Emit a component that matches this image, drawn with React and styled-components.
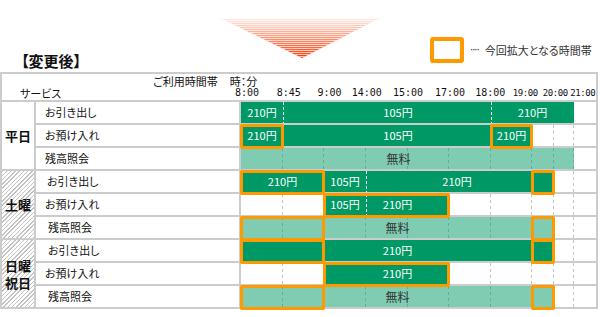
import React from "react";
import styled, { createGlobalStyle } from "styled-components";

const GlobalStyle = createGlobalStyle`
  * { box-sizing: border-box; }
  body {
    margin: 0;
    background: #fff;
    color: #222;
    font-family: "Noto Sans CJK JP", "Noto Sans", sans-serif;
    font-feature-settings: "palt";
  }
`;

// 8:00 8:45 9:00 14:00 15:00 17:00 18:00 19:00 20:00 21:00 | end
const TRACK_COLS = "42px 41px 42px 42px 41px 42px 41px 22px 20px 22px";
const T = { "8:00": 1, "8:45": 2, "9:00": 3, "14:00": 4, "15:00": 5, "17:00": 6, "18:00": 7, "19:00": 8, "20:00": 9, "21:00": 10, end: 11 };

const scale = [
  { t: " 8:00" }, { t: " 8:45" }, { t: " 9:00" }, { t: "14:00" }, { t: "15:00" },
  { t: "17:00" }, { t: "18:00" }, { t: "19:00", small: true }, { t: "20:00", small: true }, { t: "21:00", small: true },
];

const seg = (from, to, kind, label, extra = {}) => ({ from: T[from], to: T[to], kind, label, ...extra });

const groups = [
  {
    name: ["平日"],
    hatch: false,
    rows: [
      {
        service: "お引き出し",
        segs: [
          seg("8:00", "8:45", "dark", "210円"),
          seg("8:45", "18:00", "dark", "105円", { sep: true, shift: 11 }),
          seg("18:00", "21:00", "dark", "210円", { sep: true }),
        ],
        hl: [],
      },
      {
        service: "お預け入れ",
        segs: [
          seg("8:00", "8:45", "dark", "210円"),
          seg("8:45", "18:00", "dark", "105円", { sep: true, shift: 11 }),
          seg("18:00", "19:00", "dark", "210円", { sep: true }),
        ],
        hl: [["8:00", "8:45"], ["18:00", "19:00"]],
      },
      {
        service: "残高照会",
        segs: [seg("8:00", "21:00", "light", "無料", { shift: -9 })],
        hl: [],
      },
    ],
  },
  {
    name: ["土曜"],
    hatch: true,
    rows: [
      {
        service: "お引き出し",
        indent: 11,
        segs: [
          seg("8:00", "9:00", "dark", "210円"),
          seg("9:00", "14:00", "dark", "105円"),
          seg("14:00", "19:00", "dark", "210円", { sep: true, shift: 8 }),
          seg("19:00", "20:00", "dark"),
        ],
        hl: [["8:00", "9:00"], ["19:00", "20:00"]],
      },
      {
        service: "お預け入れ",
        segs: [
          seg("9:00", "14:00", "dark", "105円"),
          seg("14:00", "17:00", "dark", "210円", { sep: true, shift: -10 }),
        ],
        hl: [["9:00", "17:00"]],
      },
      {
        service: "残高照会",
        indent: 12,
        segs: [seg("8:00", "20:00", "light", "無料")],
        hl: [["8:00", "9:00"], ["19:00", "20:00"]],
      },
    ],
  },
  {
    name: ["日曜", "祝日"],
    hatch: true,
    rows: [
      {
        service: "お引き出し",
        indent: 12,
        segs: [seg("8:00", "20:00", "dark", "210円")],
        hl: [["8:00", "9:00"], ["19:00", "20:00"]],
      },
      {
        service: "お預け入れ",
        segs: [seg("9:00", "17:00", "dark", "210円", { shift: 11 })],
        hl: [["9:00", "17:00"]],
      },
      {
        service: "残高照会",
        indent: 12,
        segs: [seg("8:00", "20:00", "light", "無料")],
        hl: [["8:00", "9:00"], ["19:00", "20:00"]],
      },
    ],
  },
];

const Arrow = () => (
  <svg width="160" height="40" viewBox="0 0 160 40">
    <defs>
      <linearGradient id="arrowFill" x1="0" y1="0" x2="0" y2="1">
        <stop offset="0" stopColor="#ffeee8" />
        <stop offset="0.55" stopColor="#ff8a66" />
        <stop offset="1" stopColor="#ff3300" />
      </linearGradient>
      <pattern id="arrowStripes" width="4" height="2" patternUnits="userSpaceOnUse">
        <rect width="4" height="1" fill="#fff" opacity="0.7" />
      </pattern>
    </defs>
    <polygon points="0,0 160,0 82,40" fill="url(#arrowFill)" />
    <polygon points="0,0 160,0 82,40" fill="url(#arrowStripes)" />
  </svg>
);

const App = () => {
  return (
    <Page>
      <GlobalStyle />
      <Top>
        <Title>【変更後】</Title>
        <ArrowWrap>
          <Arrow />
        </ArrowWrap>
        <Legend>
          <LegendBox />
          <Dots>····</Dots>
          <span>今回拡大となる時間帯</span>
        </Legend>
      </Top>
      <Table>
        <HeaderCell>
          <UsageLine>
            <span>ご利用時間帯</span>
            <span>時：分</span>
          </UsageLine>
          <ServiceHead>サービス</ServiceHead>
          <TimeScale>
            {scale.map((s) => (
              <TimeLabel key={s.t} $small={s.small}>
                {s.t}
              </TimeLabel>
            ))}
          </TimeScale>
        </HeaderCell>
        {groups.map((g) => (
          <React.Fragment key={g.name.join("")}>
            <Group $hatch={g.hatch}>
              <GroupName>
                {g.name.map((n) => (
                  <span key={n}>{n}</span>
                ))}
              </GroupName>
            </Group>
            {g.rows.map((r) => (
              <React.Fragment key={r.service}>
                <Service $indent={r.indent || 9}>{r.service}</Service>
                <Track>
                  {Array.from({ length: 9 }).map((_, i) => (
                    <Tick key={i} $col={i + 1} />
                  ))}
                  {r.segs.map((s, i) => (
                    <Segment key={i} $from={s.from} $to={s.to} $kind={s.kind} $sep={s.sep} $shift={s.shift || 0}>
                      {s.label}
                    </Segment>
                  ))}
                  {r.hl.map(([a, b]) => (
                    <Highlight key={a + b} $from={T[a]} $to={T[b]} />
                  ))}
                </Track>
              </React.Fragment>
            ))}
          </React.Fragment>
        ))}
      </Table>
    </Page>
  );
};

const Page = styled.div`
  width: 600px;
  height: 317px;
  overflow: hidden;
`;

const Top = styled.div`
  display: grid;
  grid-template-columns: 220px 160px 1fr;
  height: 72px;
`;

const Title = styled.div`
  align-self: end;
  padding: 0 0 2px 21px;
  font-size: 15px;
  font-weight: bold;
  line-height: 18px;
  color: #111;
`;

const ArrowWrap = styled.div`
  align-self: start;
  margin-top: 18px;
  height: 40px;
  svg {
    display: block;
  }
`;

const Legend = styled.div`
  align-self: end;
  margin: 0 0 9px 50px;
  display: flex;
  align-items: center;
  gap: 6px;
  font-size: 11px;
  line-height: 14px;
  color: #333;
  white-space: nowrap;
`;

const LegendBox = styled.div`
  flex: none;
  width: 34px;
  height: 26px;
  border: 4px solid #ff9900;
  border-radius: 3px;
`;

const Dots = styled.span`
  font-family: "DejaVu Sans", sans-serif;
  font-size: 10px;
  letter-spacing: -1px;
  color: #333;
`;

const Table = styled.div`
  width: 598px;
  border: 2px solid #cccccc;
  border-bottom: none;
  display: grid;
  grid-template-columns: 34px 205px 355px;
  grid-template-rows: 28px;
  grid-auto-rows: 23px;
`;

const HeaderCell = styled.div`
  grid-column: 1 / -1;
  grid-row: 1;
  border-bottom: 2px solid #cccccc;
  display: grid;
  grid-template-columns: 221px 1fr;
  grid-template-rows: 12px 12px;
  padding-top: 1px;
  font-size: 11px;
  line-height: 12px;
  color: #111;
`;

const UsageLine = styled.div`
  grid-column: 1 / -1;
  display: flex;
  gap: 12px;
  padding-left: 151px;
`;

const ServiceHead = styled.div`
  padding-left: 18px;
`;

const TimeScale = styled.div`
  display: grid;
  grid-template-columns: 42px 41.5px 40px 40.5px 42px 42px 38.5px 31.5px 28.5px 26.5px;
`;

const TimeLabel = styled.span`
  text-align: center;
  white-space: pre;
  font-family: "DejaVu Sans Mono", "Liberation Mono", monospace;
  font-size: ${(p) => (p.$small ? "9px" : "10px")};
  letter-spacing: ${(p) => (p.$small ? "-0.4px" : "0")};
`;

const Group = styled.div`
  grid-column: 1;
  grid-row: span 3;
  border-right: 2px solid #cccccc;
  border-bottom: 2px solid #cccccc;
  display: flex;
  align-items: center;
  justify-content: center;
  background: ${(p) =>
    p.$hatch ? "repeating-linear-gradient(135deg, #c4c4c4 0 1px, #ffffff 1px 3px)" : "#fff"};
`;

const GroupName = styled.div`
  display: flex;
  flex-direction: column;
  align-items: center;
  font-size: 13px;
  font-weight: bold;
  line-height: 17px;
  color: #111;
`;

const Service = styled.div`
  grid-column: 2;
  border-right: 2px solid #cccccc;
  border-bottom: 2px solid #cccccc;
  padding-left: ${(p) => p.$indent}px;
  font-size: 11px;
  line-height: 21px;
  color: #111;
`;

const Track = styled.div`
  grid-column: 3;
  border-bottom: 2px solid #cccccc;
  display: grid;
  grid-template-columns: ${TRACK_COLS};
  grid-template-rows: 21px;
`;

const Tick = styled.div`
  grid-row: 1;
  grid-column: ${(p) => p.$col};
  background-image: repeating-linear-gradient(to bottom, #c4c4c4 0 3px, transparent 3px 6px);
  background-size: 1px 100%;
  background-position: right top;
  background-repeat: no-repeat;
`;

const Segment = styled.div`
  grid-row: 1;
  grid-column: ${(p) => p.$from} / ${(p) => p.$to};
  background-color: ${(p) => (p.$kind === "dark" ? "#009966" : "rgba(0, 153, 102, 0.5)")};
  background-image: ${(p) =>
    p.$sep ? "repeating-linear-gradient(to bottom, rgba(255,255,255,0.9) 0 3px, transparent 3px 5px)" : "none"};
  background-size: 1px 100%;
  background-repeat: no-repeat;
  background-position: left top;
  color: ${(p) => (p.$kind === "dark" ? "#fff" : "#333")};
  font-size: ${(p) => (p.$kind === "dark" ? "11px" : "12px")};
  line-height: 21px;
  text-align: center;
  white-space: nowrap;
  padding-left: ${(p) => Math.max(0, p.$shift * 2)}px;
  padding-right: ${(p) => Math.max(0, -p.$shift * 2)}px;
`;

const Highlight = styled.div`
  grid-row: 1;
  grid-column: ${(p) => p.$from} / ${(p) => p.$to};
  margin: -1px -1px -3px -1px;
  border: 3px solid #ff9900;
  border-radius: 2px;
  position: relative;
  z-index: 2;
`;

export default App;
